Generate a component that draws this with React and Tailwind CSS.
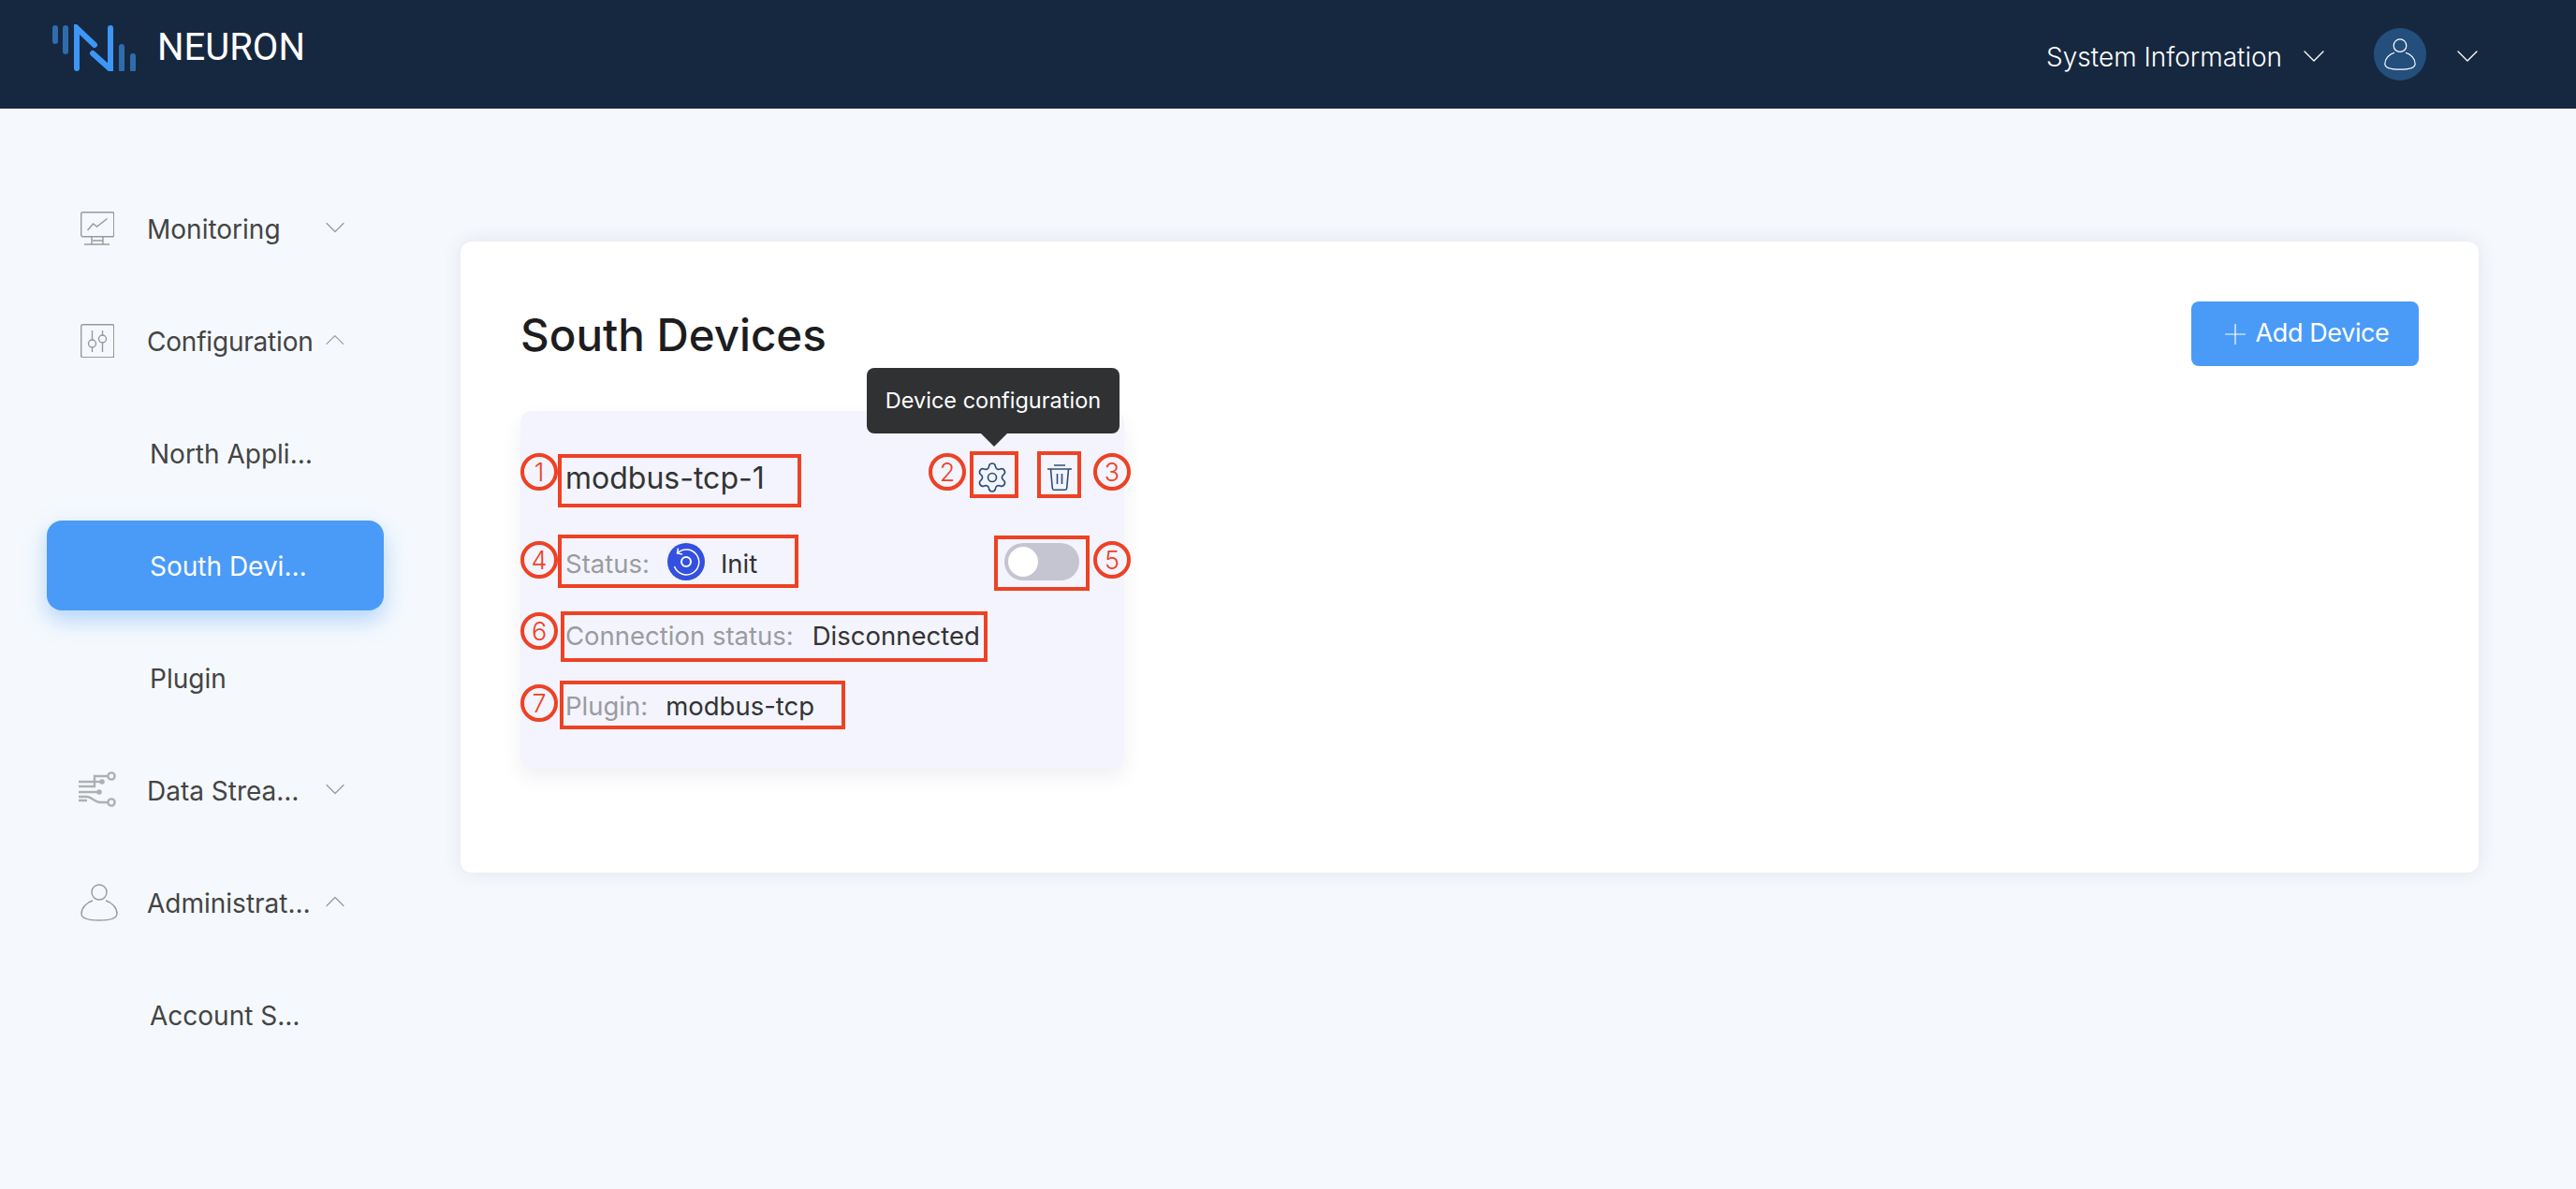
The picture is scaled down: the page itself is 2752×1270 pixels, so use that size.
import React from "react";
import { ChevronDown, ChevronUp, Plus, Settings } from "lucide-react";

const Logo = () => (
  <svg width="92" height="50" viewBox="0 0 92 50" fill="none" strokeLinecap="round">
    <g stroke="#2f6cae" strokeWidth="6">
      <path d="M3 4v14" />
      <path d="M14 4v25" />
      <path d="M74 24v24" />
      <path d="M86 34v14" />
    </g>
    <g stroke="#3d96f8" strokeWidth="6">
      <path d="M26 47V4l19 18" />
      <path d="M43 31l19 17V4" />
    </g>
  </svg>
);

const PersonIcon = ({ className, color }) => (
  <svg className={className} viewBox="0 0 40 40" fill="none" stroke={color} strokeWidth="1.4">
    <circle cx="20" cy="9" r="8" />
    <path d="M13 18C6 20 1 26 1 32c0 5 9 7 19 7s19-2 19-7c0-6-5-12-12-14" />
  </svg>
);

const MonitorIcon = () => (
  <svg width="36" height="36" viewBox="0 0 36 36" fill="none" stroke="#9a9a9a" strokeWidth="1.4">
    <rect x="0.7" y="0.7" width="35" height="26" rx="1.5" />
    <path d="M12 27v8M24 27v8M4 35h27M13 31h11" />
    <path d="M7.5 20l6-7 4 3 11-8.5" />
  </svg>
);

const SlidersIcon = () => (
  <svg width="36" height="36" viewBox="0 0 36 36" fill="none" stroke="#9a9a9a" strokeWidth="1.4">
    <rect x="0.7" y="0.7" width="35" height="35" rx="1.5" />
    <path d="M12.5 7v11M12.5 25v5M23.5 7v6M23.5 20v10" />
    <circle cx="12.5" cy="21" r="4" />
    <circle cx="23.5" cy="16" r="4" />
  </svg>
);

const StreamIcon = () => (
  <svg className="-ml-[3px]" width="42" height="40" viewBox="0 0 42 40" fill="none" stroke="#b0b0b2" strokeWidth="2.4">
    <path d="M1 11h17M1 16h17V5h14" />
    <path d="M18 11h8" />
    <path d="M1 22h22M1 27h9c5 0 8 6 14 6h9M1 31h9" />
    <circle cx="36" cy="5" r="3.6" />
    <circle cx="36" cy="33" r="3.6" />
    <circle cx="26" cy="11" r="1.6" fill="#b0b0b2" />
    <circle cx="23" cy="22" r="1.6" fill="#b0b0b2" />
  </svg>
);

const TrashIcon = () => (
  <svg width="26" height="28" viewBox="0 0 26 28" fill="none" stroke="#2c4d79" strokeWidth="1.6">
    <path d="M0 5h26M7 1h12" />
    <path d="M3.5 5l1.8 20.5c.1 1 .8 1.7 1.8 1.7h11.8c1 0 1.7-.7 1.8-1.7L22.5 5" />
    <path d="M10.5 10v11M15.5 10v11" />
  </svg>
);

const StatusIcon = () => (
  <svg width="40" height="40" viewBox="0 0 40 40" fill="none">
    <circle cx="20" cy="20" r="20" fill="#3350e0" />
    <path d="M11 10.5A13.5 13.5 0 1 1 7.5 25" stroke="#fff" strokeWidth="1.5" />
    <path d="M11.5 5.5l-1 5.5 5.5 1" stroke="#fff" strokeWidth="1.5" />
    <circle cx="20" cy="20" r="5" stroke="#fff" strokeWidth="2" />
  </svg>
);

const menu = [
  { label: "Monitoring", icon: <MonitorIcon />, arrow: "down", width: "w-[180px]" },
  { label: "Configuration", icon: <SlidersIcon />, arrow: "up", width: "w-[186px] tracking-[-0.2px]" },
  { label: "North Applications", width: "w-[180px]" },
  { label: "South Devices", active: true, width: "w-[176px]" },
  { label: "Plugin", width: "w-[180px]" },
  { label: "Data Stream Processing", icon: <StreamIcon />, arrow: "down", width: "w-[172px]" },
  { label: "Administration", icon: <PersonIcon className="w-10 h-10" color="#9a9a9a" />, arrow: "up", width: "w-[178px]" },
  { label: "Account Settings", width: "w-[168px]" },
];

const MenuItem = ({ item }) => {
  const { label, icon, arrow, active, width } = item;
  return (
    <div
      className={
        active
          ? "flex items-center h-24 rounded-2xl bg-[#4a9bf7] text-white shadow-[0_10px_24px_rgba(74,155,247,0.4)]"
          : "flex items-center h-24 text-[#444444]"
      }
    >
      <div className={icon ? "w-[107px] pl-9 shrink-0 flex items-center" : "w-[110px] shrink-0"}>{icon}</div>
      <span className={`${width} truncate pt-[2px] text-[28px]`}>{label}</span>
      {arrow === "down" && <ChevronDown className="w-9 h-9 ml-auto mr-[34px] -mt-[2px] text-[#999999]" strokeWidth={0.8} />}
      {arrow === "up" && <ChevronUp className="w-9 h-9 ml-auto mr-[34px] -mt-[2px] text-[#999999]" strokeWidth={0.8} />}
    </div>
  );
};

const Box = ({ className }) => <div className={`absolute border-4 border-[#ee4125] ${className}`} />;

const Num = ({ n, className }) => (
  <div
    className={`absolute w-10 h-10 rounded-full border-4 border-[#ee4125] flex items-center justify-center text-[#ee4125] text-[27px] font-light leading-none ${className}`}
  >
    {n}
  </div>
);

const DeviceCard = () => (
  <div className="relative w-[645px] h-[381px] mt-12 pt-12 px-12 rounded-xl bg-[#f3f4fd] shadow-[0_10px_20px_rgba(60,70,110,0.08)]">
    <div className="flex items-center justify-between h-[46px]">
      <span className="pt-[2px] text-[32px] text-[#333333]">modbus-tcp-1</span>
      <div className="flex items-center gap-[41px] mr-[8px]">
        <Settings className="w-9 h-9 text-[#2c4d79]" strokeWidth={1.1} />
        <TrashIcon />
      </div>
    </div>
    <div className="flex items-center justify-between h-10 mt-[47px]">
      <div className="flex items-center text-[27.5px]">
        <span className="pt-[5px] text-[#9b9b9f]">Status:</span>
        <span className="ml-[19px]"><StatusIcon /></span>
        <span className="ml-[17px] pt-[5px] text-[#333333]">Init</span>
      </div>
      <div className="w-20 h-10 rounded-full bg-[#c4c5d0] p-1">
        <div className="w-8 h-8 rounded-full bg-white" />
      </div>
    </div>
    <div className="flex items-center h-10 mt-[38px] pt-[3px] text-[27.5px]">
      <span className="text-[#9b9b9f]">Connection status:</span>
      <span className="ml-5 text-[#333333]">Disconnected</span>
    </div>
    <div className="flex items-center h-10 mt-[34px] pt-[5px] text-[27.5px]">
      <span className="text-[#9b9b9f]">Plugin:</span>
      <span className="ml-[19px] text-[#333333]">modbus-tcp</span>
    </div>

    {/* tooltip */}
    <div className="absolute left-[370px] top-[-46px] w-[270px] h-[70px] rounded-lg bg-[#303133] text-white text-[23.5px] flex items-center justify-center">
      Device configuration
      <div className="absolute left-[122px] bottom-[-14px] w-0 h-0 border-x-[14px] border-x-transparent border-t-[14px] border-t-[#303133]" />
    </div>

    {/* red callouts drawn over the screenshot */}
    <Box className="left-10 top-[46px] w-[260px] h-[57px]" />
    <Box className="left-[480px] top-[43px] w-[52px] h-[50px]" />
    <Box className="left-[552px] top-[43px] w-[47px] h-[50px]" />
    <Box className="left-10 top-[132px] w-[257px] h-[57px]" />
    <Box className="left-[506px] top-[133px] w-[102px] h-[59px]" />
    <Box className="left-[43px] top-[214px] w-[456px] h-[54px]" />
    <Box className="left-[42px] top-[288px] w-[305px] h-[52px]" />
    <Num n="1" className="left-0 top-[45px]" />
    <Num n="2" className="left-[436px] top-[45px]" />
    <Num n="3" className="left-[612px] top-[45px]" />
    <Num n="4" className="left-0 top-[139px]" />
    <Num n="5" className="left-[612px] top-[139px]" />
    <Num n="6" className="left-0 top-[215px]" />
    <Num n="7" className="left-0 top-[292px]" />
  </div>
);

export default function App() {
  return (
    <div className="w-[2752px] h-[1270px] overflow-hidden bg-[#f5f9fd] font-['Inter',sans-serif]">
      {/* Header */}
      <header className="flex items-center justify-between h-[116px] bg-[#16283f] text-white">
        <div className="flex items-center pl-[56px] -mt-[14px]">
          <Logo />
          <span className="ml-5 text-[40px] font-['Roboto',sans-serif]">NEURON</span>
        </div>
        <div className="flex items-center pr-[96px]">
          <span className="pt-[6px] text-[28px] font-light">System Information</span>
          <ChevronDown className="w-10 h-10 ml-[14px] mt-[4px]" strokeWidth={0.8} />
          <div className="ml-[44px] w-14 h-14 rounded-full bg-[#244f7d] flex items-center justify-center">
            <PersonIcon className="w-[34px] h-[34px]" color="#ffffff" />
          </div>
          <ChevronDown className="w-10 h-10 ml-6 mt-[4px]" strokeWidth={0.8} />
        </div>
      </header>

      <div className="flex">
        {/* Sidebar */}
        <aside className="w-[492px] shrink-0 pt-20 pl-[50px]">
          <div className="w-[360px] flex flex-col gap-6">
            {menu.map((item) => (
              <MenuItem key={item.label} item={item} />
            ))}
          </div>
        </aside>

        {/* Main */}
        <main className="pt-[142px]">
          <div className="w-[2156px] h-[674px] px-16 pt-16 rounded-xl bg-white shadow-[0_0_20px_rgba(50,50,100,0.1)]">
            <div className="flex items-center justify-between h-[69px]">
              <h1 className="pt-[2px] text-[47.5px] font-medium text-[#1d1d1f]">South Devices</h1>
              <button className="flex items-center justify-center gap-1 w-[243px] h-[69px] pr-[3px] rounded-lg bg-[#4a9bf7] text-white text-[27px] tracking-[-0.4px]">
                <Plus className="w-9 h-9" strokeWidth={0.8} />
                Add Device
              </button>
            </div>
            <DeviceCard />
          </div>
        </main>
      </div>
    </div>
  );
}
